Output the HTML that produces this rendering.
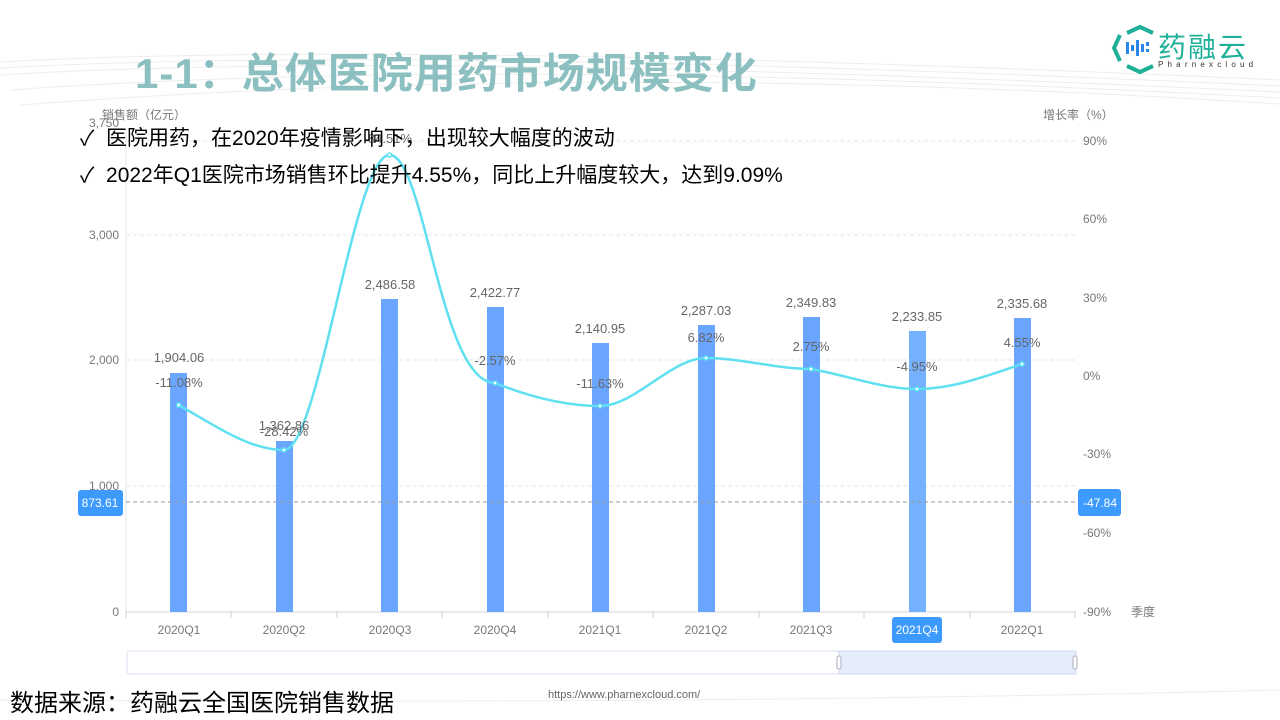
<!DOCTYPE html>
<html><head><meta charset="utf-8"><style>
body{margin:0;width:1280px;height:720px;background:#fff;overflow:hidden;position:relative;font-family:"Liberation Sans","Noto Sans CJK SC",sans-serif}
.t{position:absolute;white-space:nowrap}
</style></head><body>
<svg width="1280" height="720" style="position:absolute;left:0;top:0" font-family="Liberation Sans,Noto Sans CJK SC,sans-serif">
<g stroke="#eee" fill="none" stroke-width="1">
<path d="M0,62 Q400,40 1280,80"/><path d="M0,68 Q400,45 1280,86"/><path d="M0,75 Q400,50 1280,92"/><path d="M10,90 Q500,55 1280,98"/><path d="M20,105 Q600,60 1280,104"/>
<path d="M0,700 Q700,705 1280,690"/>
</g>
<g stroke="#e3e6ee" stroke-dasharray="4,3"><line x1="126" x2="1075" y1="141" y2="141"/><line x1="126" x2="1075" y1="235" y2="235"/><line x1="126" x2="1075" y1="360" y2="360"/><line x1="126" x2="1075" y1="486" y2="486"/></g>
<line x1="126" y1="130" x2="126" y2="612" stroke="#e0e4ea"/>
<line x1="126" y1="612" x2="1076" y2="612" stroke="#d0d5de"/>
<g stroke="#c8ccd4"><line x1="126" y1="612" x2="126" y2="618"/><line x1="231" y1="612" x2="231" y2="618"/><line x1="337" y1="612" x2="337" y2="618"/><line x1="442" y1="612" x2="442" y2="618"/><line x1="548" y1="612" x2="548" y2="618"/><line x1="653" y1="612" x2="653" y2="618"/><line x1="759" y1="612" x2="759" y2="618"/><line x1="864" y1="612" x2="864" y2="618"/><line x1="970" y1="612" x2="970" y2="618"/><line x1="1075" y1="612" x2="1075" y2="618"/></g>
<g fill="#6aa6ff">
<rect x="170" y="373" width="17" height="239"/><rect x="276" y="441" width="17" height="171"/><rect x="381" y="299" width="17" height="313"/><rect x="487" y="307" width="17" height="305"/><rect x="592" y="343" width="17" height="269"/><rect x="698" y="325" width="17" height="287"/><rect x="803" y="317" width="17" height="295"/><rect x="909" y="331" width="17" height="281" fill="#74b2ff"/><rect x="1014" y="318" width="17" height="294"/>
</g>
<line x1="126" x2="1075" y1="502" y2="502" stroke="#999" stroke-dasharray="4,3"/>
<path d="M178.7,405 C214,425 249,450 284,450 C319,450 354,155 389.5,155 C425,155 440,383 495,383 C530,397 565,406 600,406 C635,406 671,358 706,358 C741,358 776,369 811,369 C846,375 882,389 917,389 C952,389 987,376 1022,364" fill="none" stroke="#5ee0f0" stroke-width="2.5"/>
<g fill="#fff" stroke="#5ee0f0" stroke-width="1.5"><circle cx="178.7" cy="405" r="2"/><circle cx="284" cy="450" r="2"/><circle cx="389.5" cy="155" r="2"/><circle cx="495" cy="383" r="2"/><circle cx="600" cy="406" r="2"/><circle cx="706" cy="358" r="2"/><circle cx="811" cy="369" r="2"/><circle cx="917" cy="389" r="2"/><circle cx="1022" cy="364" r="2"/></g>
<g fill="#666" font-size="13" text-anchor="middle">
<text x="179" y="362">1,904.06</text><text x="284" y="430">1,362.86</text><text x="390" y="289">2,486.58</text><text x="495" y="297">2,422.77</text><text x="600" y="333">2,140.95</text><text x="706" y="315">2,287.03</text><text x="811" y="307">2,349.83</text><text x="917" y="321">2,233.85</text><text x="1022" y="308">2,335.68</text>
<text x="179" y="387">-11.08%</text><text x="284" y="436">-28.42%</text><text x="390" y="143">84.51%</text><text x="495" y="365">-2.57%</text><text x="600" y="388">-11.63%</text><text x="706" y="342">6.82%</text><text x="811" y="351">2.75%</text><text x="917" y="371">-4.95%</text><text x="1022" y="347">4.55%</text>
</g>
<g fill="#777" font-size="12" text-anchor="end"><text x="119" y="239">3,000</text><text x="119" y="364">2,000</text><text x="119" y="490">1,000</text><text x="119" y="616">0</text><text x="119" y="127">3,750</text></g>
<g fill="#777" font-size="12"><text x="1083" y="145">90%</text><text x="1083" y="223">60%</text><text x="1083" y="302">30%</text><text x="1083" y="380">0%</text><text x="1083" y="458">-30%</text><text x="1083" y="537">-60%</text><text x="1083" y="616">-90%</text><text x="1131" y="616">季度</text><text x="1043" y="119">增长率（%）</text><text x="102" y="119">销售额（亿元）</text></g>
<g fill="#777" font-size="12" text-anchor="middle"><text x="179" y="634">2020Q1</text><text x="284" y="634">2020Q2</text><text x="390" y="634">2020Q3</text><text x="495" y="634">2020Q4</text><text x="600" y="634">2021Q1</text><text x="706" y="634">2021Q2</text><text x="811" y="634">2021Q3</text><text x="1022" y="634">2022Q1</text></g>
<rect x="892" y="617" width="50" height="26" rx="3" fill="#3d9bff"/><text x="917" y="634" fill="#fff" font-size="12" text-anchor="middle">2021Q4</text>
<rect x="78" y="490" width="45" height="26" rx="3" fill="#3d9bff"/><text x="100" y="507" fill="#fff" font-size="12" text-anchor="middle">873.61</text>
<rect x="1078" y="489" width="43" height="27" rx="3" fill="#3d9bff"/><text x="1100" y="507" fill="#fff" font-size="12" text-anchor="middle">-47.84</text>
<rect x="127" y="651" width="949" height="23" rx="3" fill="#fff" stroke="#d9e1f5"/>
<rect x="839" y="651" width="237" height="23" fill="#e5ecfb" stroke="#d0d9f0"/>
<rect x="837" y="656" width="4" height="13" rx="2" fill="#fff" stroke="#aab"/><rect x="1073" y="656" width="4" height="13" rx="2" fill="#fff" stroke="#aab"/>
<path d="M1127,33 L1140,27 L1153,33 M1127,66 L1140,72 L1153,66" fill="none" stroke="#1fb09a" stroke-width="4"/>
<path d="M1120,35 L1114,48 L1120,61" fill="none" stroke="#1fb09a" stroke-width="4"/>
<g fill="#2a86e8"><rect x="1126" y="42" width="3" height="12"/><rect x="1131" y="45" width="3" height="6"/><rect x="1136" y="40" width="3" height="16"/><rect x="1141" y="44" width="3" height="8"/><rect x="1146" y="42" width="3" height="4"/><rect x="1146" y="49" width="3" height="3"/></g>
</svg>
<div class="t" style="left:1158px;top:26px;font-size:28px;color:#1fb09a;letter-spacing:2px">药融云</div>
<div class="t" style="left:1158px;top:60px;font-size:8px;color:#333;letter-spacing:4.2px">Pharnexcloud</div>
<div class="t" style="left:135px;top:40px;font-size:42px;font-weight:bold;color:#8bbfc0;letter-spacing:1px">1-1：总体医院用药市场规模变化</div>
<div class="t" style="left:80px;top:122px;font-size:21px;color:#000">✓&nbsp; 医院用药，在2020年疫情影响下，出现较大幅度的波动</div>
<div class="t" style="left:80px;top:159px;font-size:21px;color:#000">✓&nbsp; 2022年Q1医院市场销售环比提升4.55%，同比上升幅度较大，达到9.09%</div>
<div class="t" style="left:10px;top:683px;font-size:24px;color:#000">数据来源：药融云全国医院销售数据</div>
<div class="t" style="left:548px;top:689px;font-size:11px;color:#666">https://www.pharnexcloud.com/</div>
</body></html>
